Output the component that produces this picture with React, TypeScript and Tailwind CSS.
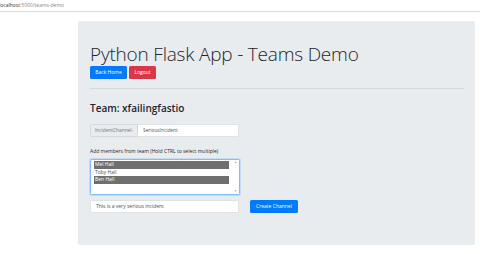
export default function App() {
  return (
    <div className="w-[480px] h-[254px] bg-white overflow-hidden" style={{ fontFamily: '"Open Sans", "Noto Sans", sans-serif' }}>

      {/* Address bar */}

      <div className="h-[12px] border-b border-[#dcdcdc] flex items-center -ml-[1px] text-[5px] leading-none">
        <span className="text-[#333]">localhost</span>
        <span className="text-[#888]">:5000/teams-demo</span>
      </div>

      {/* Page */}

      <div className="pl-[78px] pt-[9px]">

        <div className="w-[397px] h-[224px] bg-[#e9ecef] rounded-[2px] px-[12px] pt-[21px]">

          <h1 className="text-[19px] leading-[25px] font-light text-[#212529] tracking-[-0.2px]">
            Python Flask App - Teams Demo
          </h1>

          <div className="flex gap-[2px] mt-[-1px]">
            <button className="h-[13px] w-[37px] rounded-[1.5px] bg-[#007bff] text-white text-[5px] leading-none whitespace-nowrap">
              Back Home
            </button>
            <button className="h-[13px] w-[27px] rounded-[1.5px] bg-[#dc3545] text-white text-[5px] leading-none">
              Logout
            </button>
          </div>

          <div className="mt-[9px] w-[374px] border-t border-[#d6d9dc]" />

          <h3 className="mt-[13px] text-[10px] leading-[12px] font-semibold text-[#212529]">
            Team: xfailingfastio
          </h3>

          {/* Input group */}

          <div className="mt-[10px] flex w-[149px] h-[13px] text-[4.8px] leading-none whitespace-nowrap">
            <div className="w-[48px] flex items-center justify-center bg-[#e9ecef] border border-[#d4d8dc] rounded-l-[1.5px] text-[#6c757d]">
              IncidentChannel-
            </div>
            <div className="flex-1 flex items-center pl-[5px] bg-white border border-l-0 border-[#e0e3e6] rounded-r-[1.5px] text-[#495057]">
              SeriousIncident
            </div>
          </div>

          <p className="mt-[11px] text-[5px] leading-[6px] text-[#212529]">
            Add members from team (Hold CTRL to select multiple)
          </p>

          {/* Multi select */}

          <div className="mt-[5px] w-[150px] h-[36px] bg-white border border-[#80bdff] rounded-[1.5px] flex shadow-[0_0_0_1px_rgba(0,123,255,0.15)]">
            <div className="flex-1 pl-[3px] pt-[1px] pr-[4px] text-[5px] leading-none">
              <div className="h-[7.5px] bg-[#6f6f6f] text-white flex items-center pl-[1px]">Mel Hall</div>
              <div className="h-[7.5px] text-[#495057] flex items-center pl-[1px]">Toby Hall</div>
              <div className="h-[7.5px] bg-[#6f6f6f] text-white flex items-center pl-[1px]">Ben Hall</div>
            </div>
            <div className="w-[5px] flex flex-col justify-between items-center py-[1px] text-[#a0a0a0] text-[3px] leading-none mr-[1px]">
              <span>▲</span>
              <span>▼</span>
            </div>
          </div>

          {/* Message and button */}

          <div className="mt-[5px] flex gap-[11px]">
            <div className="w-[149px] h-[13px] bg-white border border-[#e0e3e6] rounded-[1.5px] flex items-center pl-[5px] text-[5px] leading-none text-[#495057]">
              This is a very serious incident
            </div>
            <button className="h-[13px] w-[48px] rounded-[1.5px] bg-[#007bff] text-white text-[5px] leading-none whitespace-nowrap">
              Create Channel
            </button>
          </div>

        </div>

      </div>

    </div>
  );
}
